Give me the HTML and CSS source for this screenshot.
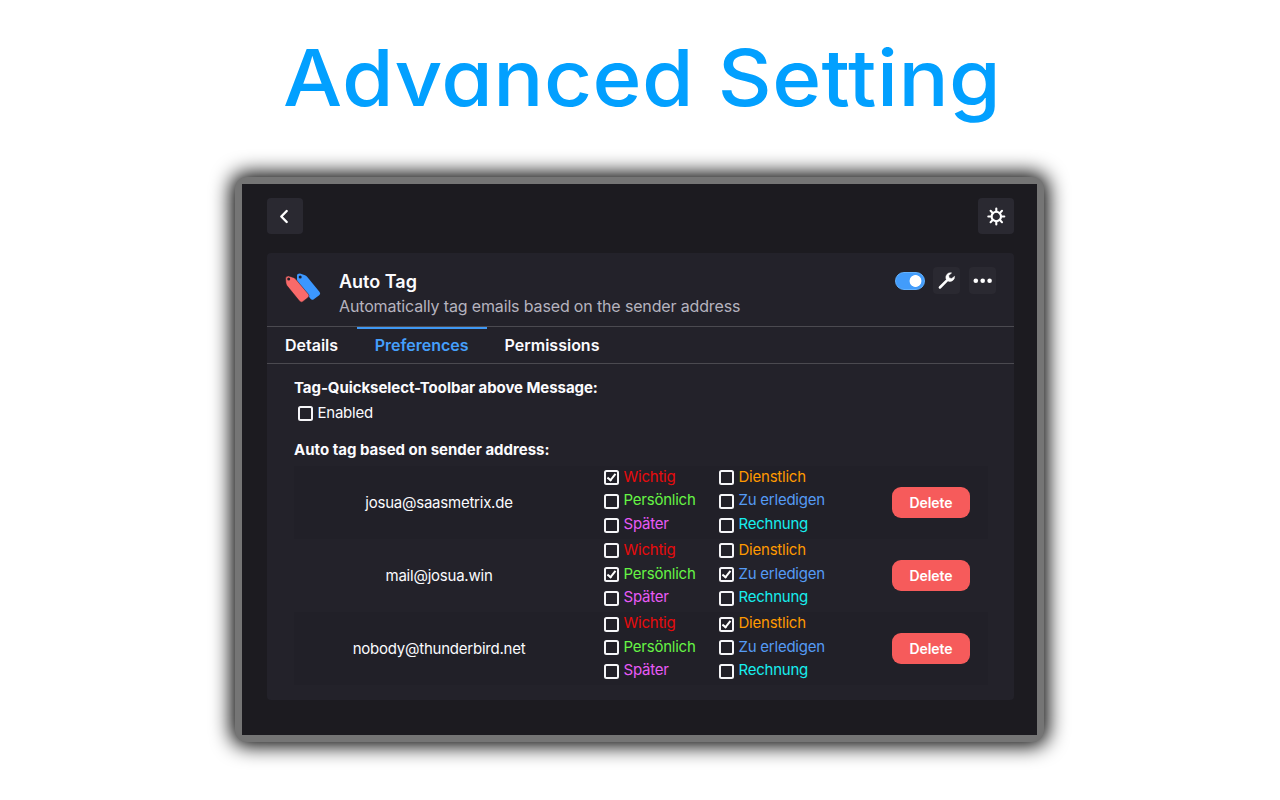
FILE: index.html
```html
<!DOCTYPE html>
<html lang="en"><head><meta charset="utf-8"><title>Advanced Setting</title><link rel="stylesheet" href="styles.css"></head>
<body>
<h1 class="headline">Advanced Setting</h1>
<div class="frame">
<main class="window">
  <div class="toolbar">
    <button class="square" aria-label="Back"><svg width="36" height="36" viewBox="0 0 36 36"><path d="M19.700 13 14.300 18.500 19.700 24" fill="none" stroke="#fff" stroke-width="2.400" stroke-linecap="round" stroke-linejoin="round"/></svg></button>
    <button class="square" aria-label="Settings"><svg width="36" height="36" viewBox="0 0 36 36"><g transform="translate(18.300 18.500)" fill="none" stroke="#fff" stroke-width="2.100" stroke-linecap="round"><circle r="4.700"/><path d="M0-5V-8M0 5V8M-5 0H-8M5 0H8M-3.600-3.600-5.700-5.700M3.600-3.600 5.700-5.700M-3.600 3.600-5.700 5.700M3.600 3.600 5.700 5.700"/></g></svg></button>
  </div>
  <section class="panel">
    <header class="addon">
      <svg class="logo" width="38" height="32" viewBox="0 0 38 32"><path d="M12 3.600Q12 1.500 15 1.500L20 3.200Q21.400 3.800 22.500 5.200L34.600 19.900Q36 21.700 34.200 23.200L28.800 27.300Q27 28.600 25.500 26.800L12.900 10.600Q12 9.400 12 7.400Z" fill="#3b97ff"/><path d="M.6 6.800Q.6 3.700 3.600 4L8.200 5.400Q9.700 5.900 10.700 7.100L23.400 22.200Q24.900 24 23.100 25.500L17.700 29.700Q16 30.900 14.500 29.100L1.900 13.600Q1 12.300.9 10.600Z" fill="#f96a6a" stroke="#222029" stroke-width=".5"/><circle cx="15.200" cy="5" r="1.500" fill="#222029"/><circle cx="3.700" cy="7" r="1.500" fill="#222029"/></svg>
      <div class="about"><h2>Auto Tag</h2><p>Automatically tag emails based on the sender address</p></div>
      <div class="actions">
        <span class="toggle"></span>
        <button class="mini" aria-label="Preferences"><svg width="27" height="27" viewBox="0 0 27 27"><path d="M6.900 20.500 15 12.300" stroke="#fff" stroke-width="2.500" stroke-linecap="round"/><path d="M17.200 5.700A4.800 4.800 0 0 0 13 11.800L15.500 14.300A4.800 4.800 0 0 0 21.600 9.300L18.700 11.500 16.200 10.900 15.700 8.600 18.600 5.900Z" fill="#fff" stroke="#fff" stroke-width=".5" stroke-linejoin="round"/></svg></button>
        <button class="mini" aria-label="More"><svg width="27" height="27" viewBox="0 0 27 27" fill="#fff"><circle cx="6.800" cy="13.700" r="2.300"/><circle cx="13.700" cy="13.700" r="2.300"/><circle cx="20.600" cy="13.700" r="2.300"/></svg></button>
      </div>
    </header>
    <nav class="tabs"><a>Details</a><a class="active">Preferences</a><a>Permissions</a></nav>
    <div class="content">
      <h3 class="tight">Tag-Quickselect-Toolbar above Message:</h3>
      <label class="check enabled"><i></i><span>Enabled</span></label>
      <h3 class="second">Auto tag based on sender address:</h3>
      <div class="row shade"><div class="email">josua@saasmetrix.de</div>
        <div class="tags"><label class="check red"><i class="on"></i><span>Wichtig</span></label><label class="check orange"><i></i><span>Dienstlich</span></label><label class="check green"><i></i><span>Persönlich</span></label><label class="check blue"><i></i><span>Zu erledigen</span></label><label class="check violet"><i></i><span>Später</span></label><label class="check cyan"><i></i><span>Rechnung</span></label></div>
        <button class="delete">Delete</button></div>
      <div class="row"><div class="email">mail@josua.win</div>
        <div class="tags"><label class="check red"><i></i><span>Wichtig</span></label><label class="check orange"><i></i><span>Dienstlich</span></label><label class="check green"><i class="on"></i><span>Persönlich</span></label><label class="check blue"><i class="on"></i><span>Zu erledigen</span></label><label class="check violet"><i></i><span>Später</span></label><label class="check cyan"><i></i><span>Rechnung</span></label></div>
        <button class="delete">Delete</button></div>
      <div class="row shade"><div class="email">nobody@thunderbird.net</div>
        <div class="tags"><label class="check red"><i></i><span>Wichtig</span></label><label class="check orange"><i class="on"></i><span>Dienstlich</span></label><label class="check green"><i></i><span>Persönlich</span></label><label class="check blue"><i></i><span>Zu erledigen</span></label><label class="check violet"><i></i><span>Später</span></label><label class="check cyan"><i></i><span>Rechnung</span></label></div>
        <button class="delete">Delete</button></div>
    </div>
  </section>
</main>
</div>
</body></html>
```
FILE: styles.css
```css
*, *::after { box-sizing: border-box; }
body { margin: 0; width: 1280px; height: 800px; overflow: hidden; background: #fff; font-family: Inter, "Liberation Sans", sans-serif; }
h1, h2, h3, p { margin: 0; }
button { border: 0; padding: 0; font: inherit; }
svg { display: block; }
.headline { width: 720px; height: 177px; margin-left: 283px; padding-top: 22px; font-size: 78px; line-height: 112px; font-weight: 500; color: #02a0ff; white-space: nowrap; font-feature-settings: "cv11"; letter-spacing: .4px; word-spacing: 1px; transform: scaleX(1.07); transform-origin: 0 0; }
.frame { width: 809px; height: 565px; margin-left: 235px; padding: 7px; border-radius: 12px; background: #757575; box-shadow: 0 0 20px 4px #000; }
.window { width: 795px; height: 551px; padding: 14px 23px 0 25px; background: #1c1b20; }
.toolbar { display: flex; justify-content: space-between; margin-bottom: 18.500px; }
.square { width: 36px; height: 36px; border-radius: 4px; background: #2a2931; }
.panel { height: 447px; border-radius: 4px; background: #23222a; color: #fbfbfe; }
.addon { display: flex; height: 74px; padding: 14.500px 18px 0; border-bottom: 1px solid #4b4a50; }
.logo { margin: 5px 16px 0 0; }
.about { padding-top: 2.500px; }
.about h2 { font-size: 18px; line-height: 24px; font-weight: 600; }
.about p { font-size: 16px; line-height: 25px; letter-spacing: -.15px; color: #b5b3bf; white-space: nowrap; }
.actions { display: flex; gap: 9px; margin-left: auto; }
.toggle { width: 30px; height: 18px; margin: 5px -1px 0 1px; border: 1px solid #62b2ff; border-radius: 9px; background: radial-gradient(circle at 19.500px 8px, #fff 5.500px, #429cfb 6.300px); }
.mini { width: 27px; height: 27px; border-radius: 4px; background: #2a2931; }
.tabs { display: flex; height: 37px; border-bottom: 1px solid #4b4a50; font-size: 16px; line-height: 37px; font-weight: 600; }
.tabs a { padding: 0 18px; white-space: nowrap; }
.tabs a:first-child { padding-right: 18.600px; }
.tabs .active { color: #459ffb; box-shadow: inset 0 2px #3f98f4; }
.content { padding: 12px 26px 0 27px; font-size: 15px; letter-spacing: -.23px; }
h3 { font-size: 15px; line-height: 24px; font-weight: 700; letter-spacing: 0; white-space: nowrap; }
.tight { letter-spacing: -.07px; }
.enabled { height: 26px; padding-left: 4px; }
.second { margin: 12px 0 4px; }
.row { display: flex; align-items: center; height: 73.200px; }
.shade { background: #212028; }
.email { width: 289px; padding-left: 1px; text-align: center; }
.tags { display: grid; grid-template-columns: 115px 115px; grid-auto-rows: 23.700px; margin: -3.500px 0 0 21px; }
.check { display: flex; align-items: center; gap: 4.500px; white-space: nowrap; line-height: 20px; }
.check i { width: 15px; height: 15px; margin-top: 2px; border: 2px solid #f5f5f8; border-radius: 2.500px; }
.check .on { position: relative; }
.check .on::after { content: ""; position: absolute; left: 3.200px; top: 0; width: 5.300px; height: 9px; border: solid #fff; border-width: 0 2.200px 2.200px 0; transform: rotate(38deg); }
.red { color: #e80b0c; }
.orange { color: #ff9900; }
.green { color: #66f445; }
.blue { color: #559bf5; }
.violet { color: #e85af6; }
.cyan { color: #17eeee; }
.delete { width: 78px; height: 31px; margin: 0 0 0 58px; border-radius: 9px; background: #f65b5b; color: #fff; font-size: 14px; font-weight: 600; letter-spacing: -.07px; }
```
